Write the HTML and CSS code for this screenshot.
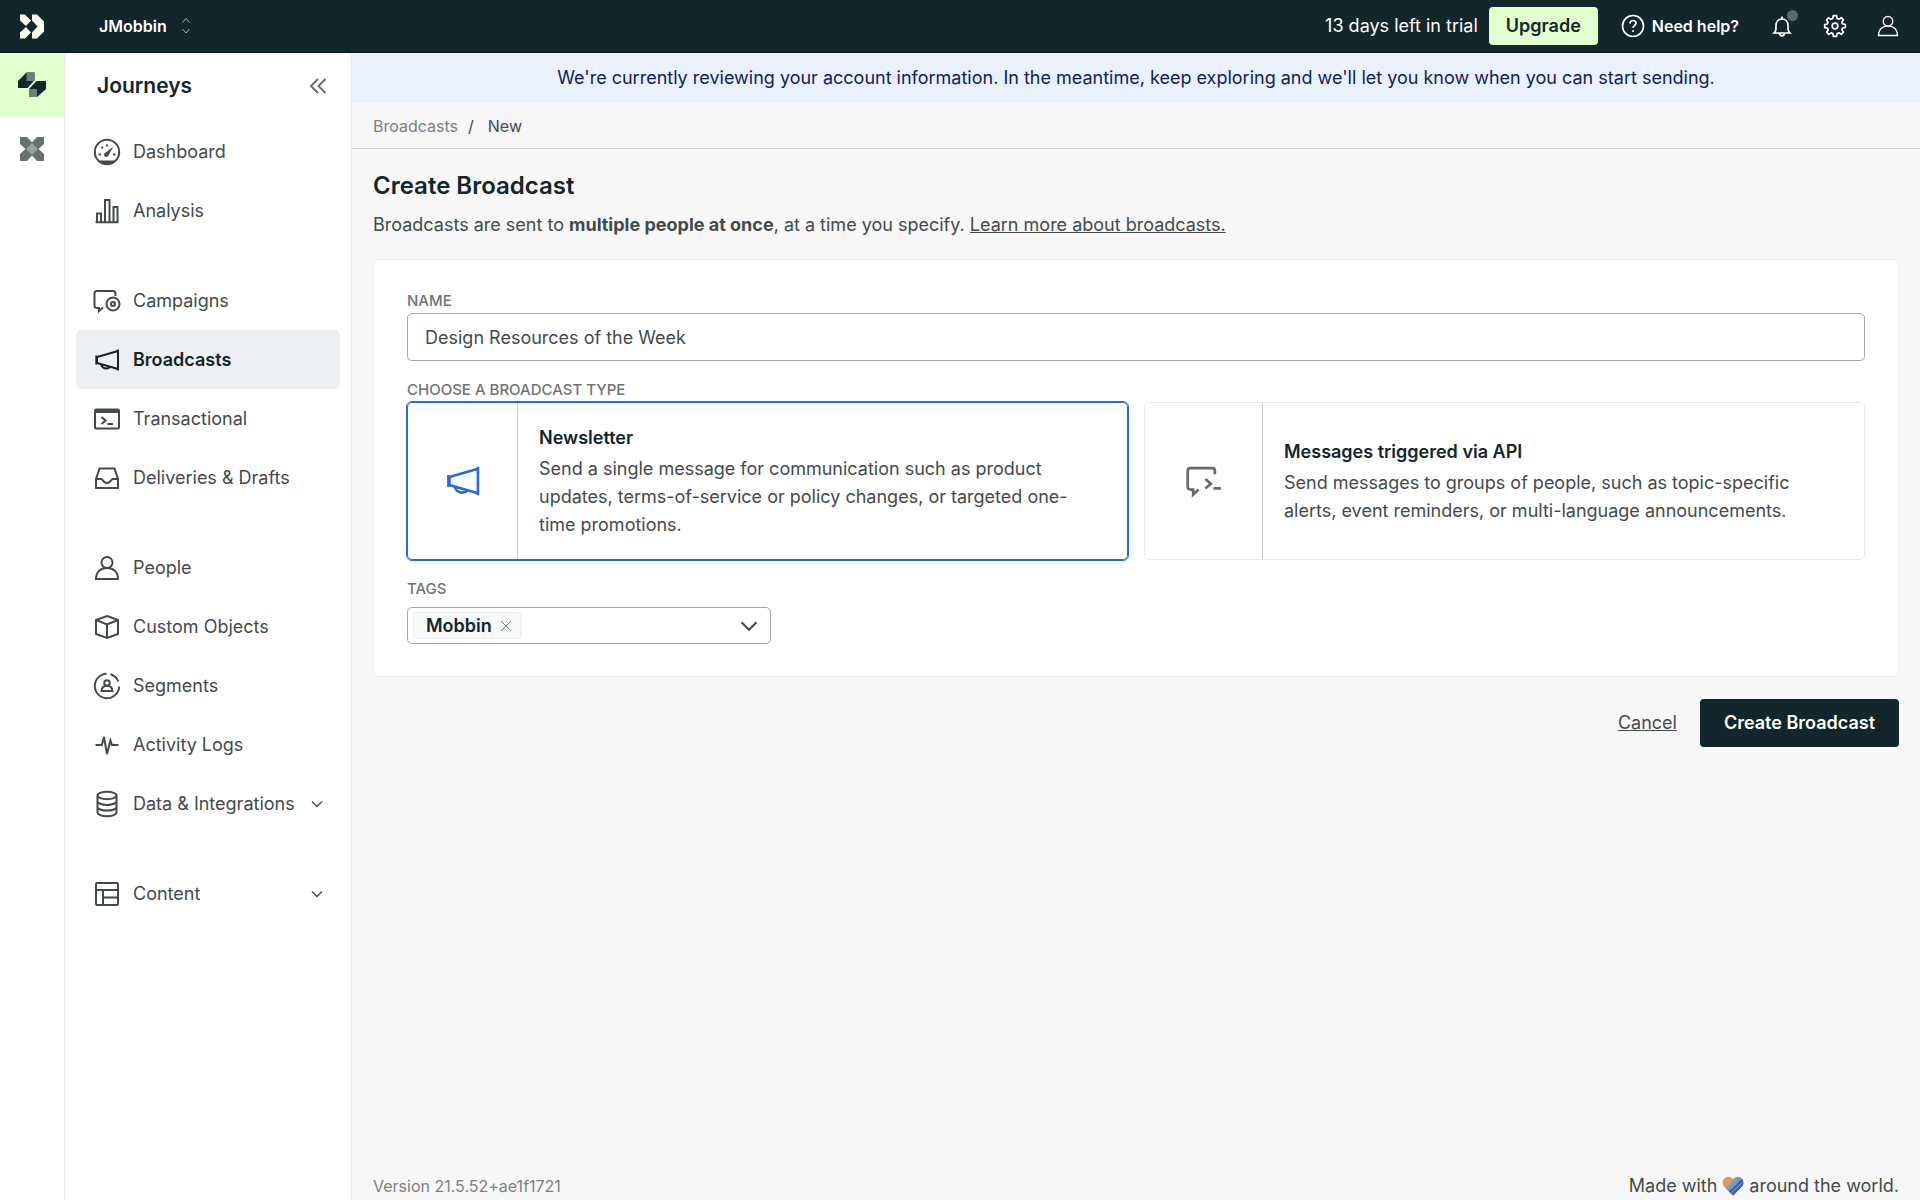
FILE: index.html
```html
<!DOCTYPE html>
<html lang="en">
<head>
<meta charset="utf-8">
<meta name="viewport" content="width=device-width, initial-scale=1">
<title>Create Broadcast</title>
<link rel="stylesheet" href="styles.css">
</head>
<body>
<svg class="sprite" aria-hidden="true">
  <symbol id="megaphone" viewBox="0 0 28 28">
    <path d="M25 3.500v21M25 5 4 11v6l21 6M3.300 9.500v9M8 18.500c1 3 3.500 4 5.500 4s3-.5 3.500-1.800"/>
  </symbol>
  <symbol id="person" viewBox="0 0 28 28">
    <circle cx="14" cy="8.500" r="5.500"/>
    <path d="M3 25c0-7 4.500-11 11-11s11 4 11 11z"/>
  </symbol>
  <symbol id="chevron" viewBox="0 0 16 16"><path d="m3 5.500 5 5 5-5"/></symbol>
</svg>
<header class="topbar">
  <a class="brand" href="#" aria-label="Home">
    <svg width="24" height="25" viewBox="0 0 24 25"><path fill="#f9fff0" d="M0 .5h5l6 6-5 5.500L0 6.500zM0 24.500h5l6-6-5-5.500-6 5.500zM12 .5h5l7 7v10l-7 7h-5v-6l5.500-6L12 6.500z"/></svg>
  </a>
  <button class="workspace" type="button">JMobbin
    <svg width="10" height="18" viewBox="0 0 10 18"><path d="m1.500 5.500 3.500-4 3.500 4M1.500 12l3.500 4 3.500-4"/></svg>
  </button>
  <div class="tools">
    <span class="trial">13 days left in trial</span>
    <button class="upgrade" type="button">Upgrade</button>
    <a class="help" href="#">
      <svg class="icon" width="24" height="24" viewBox="0 0 24 24"><circle cx="12" cy="12" r="10.500"/><path d="M9 9.500c0-2 1.300-3 3-3s3 1 3 2.700c0 2.300-3 2.300-3 4.800M12 16.300v1.700"/></svg>
      Need help?
    </a>
    <button class="tool bell" type="button" aria-label="Notifications">
      <svg class="icon" width="24" height="24" viewBox="0 0 24 24"><path d="M4 19h16c-2-2-2-3-2-7.500C18 7.500 15.500 5 12 5s-6 2.500-6 6.500C6 16 6 17 4 19zM12 5V2.500M9.500 19.500c.3 1.500 1.200 2.300 2.500 2.300s2.200-.8 2.500-2.300"/></svg>
      <span class="dot"></span>
    </button>
    <button class="tool" type="button" aria-label="Settings">
      <svg class="icon" width="24" height="24" viewBox="0 0 24 24"><circle cx="12" cy="12" r="2.800"/><path stroke-linejoin="round" d="m10.300 1.700-.5 2.800-1.900.8-2.400-1.500-2 2.300 1.500 2.400-.6 1.500-2.700.6v3l2.800.5.7 1.800-1.600 2.300 2.200 2.200 2.400-1.500 1.700.7.5 2.700h3.200l.6-2.800 1.700-.7 2.400 1.500 2.100-2.200-1.500-2.400.7-1.700 2.700-.5v-3l-2.800-.6-.7-1.700 1.600-2.400-2.200-2.100-2.300 1.500-1.800-.7-.6-2.800z"/></svg>
    </button>
    <button class="tool" type="button" aria-label="Account">
      <svg class="icon" width="24" height="24"><use href="#person"/></svg>
    </button>
  </div>
</header>
<div class="shell">
  <nav class="rail" aria-label="Products">
    <a class="rail-item current" href="#" aria-label="Journeys">
      <svg width="28" height="26" viewBox="0 0 28 26"><path fill="#12262b" d="m0 9 8.500-8.500h8v7.800L9.500 16H0zM11 17l7.500-8H28v8l-9 8h-8z"/><path fill="#6d7f79" d="M8.500.5h8V9h-8zM11 17h8v8h-8z"/></svg>
    </a>
    <a class="rail-item" href="#" aria-label="Data Pipelines">
      <svg width="24" height="24" viewBox="0 0 24 24"><path fill="#66706f" d="M0 0h7l5 5.500L17 0h7v7l-5.500 5 5.500 5v7h-7l-5-5.500L7 24H0v-7l5.500-5L0 7z"/><path fill="#99a29f" d="m12 6 6 6-6 6-6-6z"/></svg>
    </a>
  </nav>
  <aside class="sidebar">
    <div class="sidebar-head">
      <h2>Journeys</h2>
      <button class="collapse" type="button" aria-label="Collapse menu"><svg width="18" height="18" viewBox="0 0 18 18"><path d="m9 2-7 7 7 7M16.500 2l-7 7 7 7"/></svg></button>
    </div>
    <nav aria-label="Journeys">
      <ul class="menu">
        <li><a href="#"><svg class="icon" width="28" height="28" viewBox="0 0 28 28"><circle cx="14" cy="14" r="12.200"/><path class="solid" d="M5 22.500h18c-2.500 3-5.500 4-9 4s-6.500-1-9-4zM20.500 8.500l-5.300 9.300a2.200 2.200 0 1 1-3.500-2.600z"/><path d="M14 6.500v2M8.500 9l1.300 1.300M5.500 16.500h2.500M20 16.500h2.500"/></svg>Dashboard</a></li>
        <li><a href="#"><svg class="icon" width="28" height="28" viewBox="0 0 28 28"><path d="M2.500 25.200h23M4 25V16.500h4V25M12 25V3h4.500v22M20.500 25V10h4v15"/></svg>Analysis</a></li>
      </ul>
      <ul class="menu">
        <li><a href="#"><svg class="icon" width="28" height="28" viewBox="0 0 28 28"><path d="M22.500 9V6.500c0-1.500-.8-2.500-2.500-2.500H4C2.300 4 1.500 5 1.500 6.500v12C1.500 20 2.300 21 4 21h2v3l4-3.500"/><circle cx="20" cy="17" r="6.500"/><circle cx="20" cy="17" r="2"/></svg>Campaigns</a></li>
        <li><a class="active" aria-current="page" href="#"><svg class="icon" width="28" height="28"><use href="#megaphone"/></svg>Broadcasts</a></li>
        <li><a href="#"><svg class="icon" width="28" height="28" viewBox="0 0 28 28"><rect x="2" y="4.500" width="24" height="19" rx="1"/><path class="solid" d="M2 4.500h24V8H2z"/><path d="M2 6.500h24M8.500 12l4 3.500-4 3.500M14.500 19h5.500"/></svg>Transactional</a></li>
        <li><a href="#"><svg class="icon" width="28" height="28" viewBox="0 0 28 28"><path d="M3 15 6.500 4.500h15L25 15v9H3zM3 15h5.500c1 0 1.500 4 5.500 4s4.500-4 5.500-4H25"/></svg>Deliveries &amp; Drafts</a></li>
      </ul>
      <ul class="menu">
        <li><a href="#"><svg class="icon" width="28" height="28"><use href="#person"/></svg>People</a></li>
        <li><a href="#"><svg class="icon" width="28" height="28" viewBox="0 0 28 28"><path d="m14 3 11 4v14l-11 4-11-4V7zM3 7l11 4.500L25 7M14 11.500V25"/></svg>Custom Objects</a></li>
        <li><a href="#"><svg class="icon" width="28" height="28" viewBox="0 0 28 28"><path d="M13.500 1.800A12.200 12.200 0 1 0 26.200 14.500M17.500 2.300a12.200 12.200 0 0 1 7.800 7.200"/><circle cx="14" cy="11" r="2.800"/><path d="M8.500 19c.2-3.500 2-5.200 5.500-5.200s5.300 1.700 5.500 5.200z"/></svg>Segments</a></li>
        <li><a href="#"><svg class="icon" width="28" height="28" viewBox="0 0 28 28"><path d="M2.500 14h6.300L11 6l3 17 3.500-13.500 1.500 4.500h6.500"/></svg>Activity Logs</a></li>
        <li><a href="#"><svg class="icon" width="28" height="28" viewBox="0 0 28 28"><ellipse cx="14" cy="5.500" rx="9.500" ry="3.700"/><path d="M4.500 5.500v17c0 2 4 3.700 9.500 3.700s9.500-1.700 9.500-3.700v-17M4.500 11.200c0 2 4 3.700 9.500 3.700s9.500-1.700 9.500-3.700M4.500 16.900c0 2 4 3.700 9.500 3.700s9.500-1.700 9.500-3.700"/></svg>Data &amp; Integrations<svg class="icon more" width="16" height="16"><use href="#chevron"/></svg></a></li>
      </ul>
      <ul class="menu">
        <li><a href="#"><svg class="icon" width="28" height="28" viewBox="0 0 28 28"><rect x="3" y="3" width="22" height="22" rx="1"/><path d="M3 10h22M10 10v15M10 17.500h15"/></svg>Content<svg class="icon more" width="16" height="16"><use href="#chevron"/></svg></a></li>
      </ul>
    </nav>
  </aside>
  <div class="content">
    <p class="notice">We're currently reviewing your account information. In the meantime, keep exploring and we'll let you know when you can start sending.</p>
    <nav class="crumbs" aria-label="Breadcrumb"><a href="#">Broadcasts</a><span class="slash">/</span><span class="here">New</span></nav>
    <main class="page">
      <h1>Create Broadcast</h1>
      <p class="intro">Broadcasts are sent to <strong>multiple people at once</strong>, at a time you specify. <a href="#">Learn more about broadcasts.</a></p>
      <form id="broadcast" class="panel">
        <label class="caption" for="name">Name</label>
        <input class="name" id="name" type="text" value="Design Resources of the Week">
        <fieldset class="types">
          <legend class="caption">Choose a broadcast type</legend>
          <div class="options">
            <label class="option">
              <input type="radio" name="type" checked>
              <span class="option-icon"><svg class="icon" width="38" height="38"><use href="#megaphone"/></svg></span>
              <span class="option-text"><b>Newsletter</b><span>Send a single message for communication such as product updates, terms-of-service or policy changes, or targeted one-time promotions.</span></span>
            </label>
            <label class="option">
              <input type="radio" name="type">
              <span class="option-icon"><svg class="icon" width="38" height="38" viewBox="0 0 28 28"><path d="M22 9V6.500c0-1.200-.8-2-2-2H4c-1.200 0-2 .8-2 2v11.800c0 1.200.8 2 2 2h2V24l4-3.700M15 12.500l4 3.500-4 3.500M21 19.500h5.500"/></svg></span>
              <span class="option-text"><b>Messages triggered via API</b><span>Send messages to groups of people, such as topic-specific alerts, event reminders, or multi-language announcements.</span></span>
            </label>
          </div>
        </fieldset>
        <label class="caption" for="tags">Tags</label>
        <div class="tags">
          <span class="tag">Mobbin<button type="button" aria-label="Remove Mobbin"><svg width="12" height="12" viewBox="0 0 12 12"><path d="m1 1 10 10M11 1 1 11"/></svg></button></span>
          <select id="tags"><option value=""></option></select>
          <svg class="icon arrow" width="24" height="24"><use href="#chevron"/></svg>
        </div>
      </form>
      <div class="actions">
        <a href="#">Cancel</a>
        <button class="primary" type="submit" form="broadcast">Create Broadcast</button>
      </div>
    </main>
    <footer class="footer">
      <span class="version">Version 21.5.52+ae1f1721</span>
      <span class="made">Made with
        <svg width="22" height="20" viewBox="0 0 22 20"><defs><clipPath id="heart"><path d="M11 19.500 1.500 10C-2 4.500 5-3 11 3c6-6 13 1.500 9.500 7z"/></clipPath></defs><g clip-path="url(#heart)"><path fill="#dd9a62" d="M0 0h22v20H0z"/><path fill="#6f9fc4" d="M3 13 16 0h6v20H8z"/><path fill="#3e5fa6" d="m6 16 14-13h2v17H8z"/><path fill="none" stroke="#8fa5d8" d="m9 17 12-11"/></g></svg>
        around the world.</span>
    </footer>
  </div>
</div>
</body>
</html>
```
FILE: styles.css
```css
*, *::before, *::after { box-sizing: border-box; }
body {
  margin: 0;
  min-height: 100vh;
  display: flex;
  flex-direction: column;
  background: #f7f7f7;
  color: #444a4a;
  font: 18px/28px Inter, "Liberation Sans", sans-serif;
}
h1, h2, p, ul { margin: 0; padding: 0; }
ul { list-style: none; }
a { color: inherit; }
button, input, select { font: inherit; color: inherit; }
button { border: 0; padding: 0; background: none; cursor: pointer; }
svg { display: block; flex: none; }
.sprite { position: absolute; width: 0; height: 0; }
.icon, .workspace svg, .collapse svg, .tag svg { fill: none; stroke: currentColor; stroke-width: 2; }
.solid { fill: currentColor; stroke: none; }

.topbar {
  display: flex;
  align-items: center;
  height: 53px;
  padding-right: 20px;
  background: #12262b;
  border-bottom: 1px solid #05171b;
  color: #fff;
}
.brand { width: 64px; display: flex; justify-content: center; }
.workspace {
  display: flex;
  align-items: center;
  gap: 14px;
  margin-left: 35px;
  font-size: 16px;
  font-weight: 600;
}
.workspace svg { stroke: #a9b4b3; stroke-width: 1; }
.tools { display: flex; align-items: center; margin-left: auto; }
.upgrade {
  height: 38px;
  margin: 0 23px 0 11px;
  padding: 0 17px;
  border-radius: 4px;
  background: #e4ffce;
  color: #12262b;
  font-weight: 600;
}
.help {
  display: flex;
  align-items: center;
  gap: 7px;
  margin-right: 31px;
  font-size: 16px;
  font-weight: 600;
  text-decoration: none;
}
.topbar .icon { stroke-width: 1.7; }
.tool { position: relative; }
.tool + .tool { margin-left: 29px; }
.dot {
  position: absolute;
  top: -4px;
  right: -4px;
  width: 11px;
  height: 11px;
  border-radius: 50%;
  background: #5c696c;
}

.shell { flex: 1; display: flex; }
.rail { width: 65px; background: #fff; border-right: 1px solid #e6e8e9; }
.rail-item { display: flex; align-items: center; justify-content: center; height: 64px; }
.rail-item.current { background: #e4ffce; }
.sidebar { width: 287px; background: #fff; border-right: 1px solid #e6e8e9; }
.sidebar-head {
  display: flex;
  align-items: center;
  justify-content: space-between;
  height: 69px;
  padding: 0 24px 3px 32px;
}
.sidebar-head h2 { color: #12262b; font-size: 21px; font-weight: 600; }
.collapse { color: #6a7172; }
.menu { padding: 0 11px; }
.menu + .menu { margin-top: 31px; }
.menu a {
  display: flex;
  align-items: center;
  gap: 12px;
  height: 59px;
  padding: 0 15px 0 17px;
  border-radius: 5px;
  text-decoration: none;
  white-space: nowrap;
}
.menu .active { background: #edeff0; color: #12262b; font-weight: 600; }
.more { margin-left: auto; }
.icon.more, .icon.arrow { stroke-width: 1.4; }

.content { flex: 1; min-width: 0; display: flex; flex-direction: column; }
.notice {
  padding: 11px 21px;
  background: #e8f1fc;
  color: #15205a;
  text-align: center;
}
.crumbs {
  display: flex;
  align-items: center;
  height: 46px;
  padding: 0 21px;
  border-bottom: 1px solid #d3d6d6;
  font-size: 16px;
}
.crumbs a { color: #7b8282; text-decoration: none; }
.slash { margin: 0 14px 0 10px; }
.page { padding: 20px 21px; }
h1 { color: #12262b; font-size: 24px; line-height: 34px; font-weight: 600; }
.intro { margin-top: 8px; }
.panel {
  margin-top: 20px;
  padding: 29px 33px 32px;
  background: #fff;
  border: 1px solid #eceeee;
  border-radius: 5px;
}
.caption {
  display: block;
  padding: 0;
  color: #6d7474;
  font-size: 15px;
  line-height: 24px;
  font-weight: 500;
  text-transform: uppercase;
}
.name {
  display: block;
  width: 100%;
  height: 48px;
  padding: 0 17px;
  border: 1px solid #a3a8a8;
  border-radius: 5px;
  background: #fff;
}
.types { min-width: 0; margin: 17px 0; padding: 0; border: 0; }
.options { display: grid; grid-template-columns: 1fr 1fr; gap: 16px; }
.option {
  display: flex;
  min-height: 158px;
  border: 1px solid #e8eaea;
  border-radius: 5px;
}
.option:has(:checked) { border-color: #2a6bdc; outline: 1px solid #2a6bdc; }
.option input { appearance: none; width: 0; margin: 0; }
.option-icon {
  flex: none;
  display: flex;
  align-items: center;
  justify-content: center;
  width: 118px;
  border-right: 1px solid #c9cece;
  color: #666c6c;
}
.option :checked + .option-icon { width: 110px; color: #2a6bdc; }
.option-text {
  display: flex;
  flex-direction: column;
  justify-content: center;
  gap: 3px;
  padding: 10px 32px 10px 21px;
}
.option-text b { color: #12262b; font-weight: 600; }
.tags {
  display: flex;
  align-items: center;
  width: 364px;
  max-width: 100%;
  height: 37px;
  margin-top: 6px;
  padding: 0 9px 0 5px;
  border: 1px solid #a3a8a8;
  border-radius: 5px;
}
.tag {
  display: flex;
  align-items: center;
  gap: 8px;
  height: 27px;
  padding: 0 8px 0 12px;
  border: 1px solid #eceeee;
  border-radius: 3px;
  background: #f7f8f8;
  color: #12262b;
  font-weight: 600;
}
.tag svg { stroke: #7b8282; stroke-width: 1; }
.tags select { flex: 1; min-width: 0; appearance: none; border: 0; background: none; }
.actions {
  display: flex;
  align-items: center;
  justify-content: flex-end;
  gap: 23px;
  margin-top: 22px;
}
.primary {
  height: 48px;
  padding: 0 24px;
  border-radius: 4px;
  background: #12262b;
  color: #fff;
  font-weight: 600;
}
.footer {
  display: flex;
  align-items: center;
  justify-content: space-between;
  margin-top: auto;
  padding: 0 21px;
}
.version { color: #7b8282; font-size: 16px; }
.made { display: flex; align-items: center; gap: 5px; }
```
